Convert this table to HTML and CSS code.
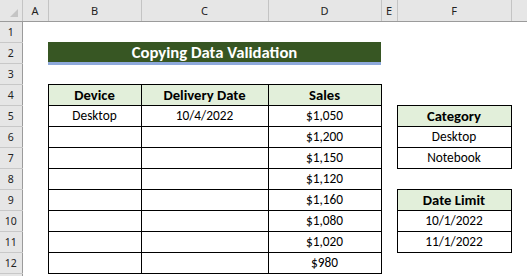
FILE: index.html
```html
<!DOCTYPE html>
<html lang="en">
<head>
    <meta charset="UTF-8">
    <title>Copying Data Validation</title>
    <link rel="stylesheet" href="styles.css">
</head>
<body>
    <table class="sheet">
        <colgroup>
            <col class="c-hdr">
            <col class="c-a">
            <col class="c-b">
            <col class="c-c">
            <col class="c-d">
            <col class="c-e">
            <col class="c-f">
            <col class="c-g">
        </colgroup>
        <tr class="col-heads">
            <td class="corner"><span class="tri"></span></td>
            <td>A</td><td>B</td><td>C</td><td>D</td><td>E</td><td>F</td><td></td>
        </tr>
        <tr><td class="rh">1</td><td></td><td></td><td></td><td></td><td></td><td></td><td></td></tr>
        <tr><td class="rh">2</td><td></td><td colspan="3" class="title">Copying Data Validation</td><td></td><td></td><td></td></tr>
        <tr><td class="rh">3</td><td></td><td></td><td></td><td></td><td></td><td></td><td></td></tr>
        <tr>
            <td class="rh">4</td><td></td>
            <td class="box head">Device</td><td class="box head">Delivery Date</td><td class="box head">Sales</td>
            <td></td><td></td><td></td>
        </tr>
        <tr>
            <td class="rh">5</td><td></td>
            <td class="box">Desktop</td><td class="box">10/4/2022</td><td class="box">$1,050</td>
            <td></td><td class="box head">Category</td><td></td>
        </tr>
        <tr>
            <td class="rh">6</td><td></td>
            <td class="box"></td><td class="box"></td><td class="box">$1,200</td>
            <td></td><td class="box">Desktop</td><td></td>
        </tr>
        <tr>
            <td class="rh">7</td><td></td>
            <td class="box"></td><td class="box"></td><td class="box">$1,150</td>
            <td></td><td class="box">Notebook</td><td></td>
        </tr>
        <tr>
            <td class="rh">8</td><td></td>
            <td class="box"></td><td class="box"></td><td class="box">$1,120</td>
            <td></td><td></td><td></td>
        </tr>
        <tr>
            <td class="rh">9</td><td></td>
            <td class="box"></td><td class="box"></td><td class="box">$1,160</td>
            <td></td><td class="box head">Date Limit</td><td></td>
        </tr>
        <tr>
            <td class="rh">10</td><td></td>
            <td class="box"></td><td class="box"></td><td class="box">$1,080</td>
            <td></td><td class="box">10/1/2022</td><td></td>
        </tr>
        <tr>
            <td class="rh">11</td><td></td>
            <td class="box"></td><td class="box"></td><td class="box">$1,020</td>
            <td></td><td class="box">11/1/2022</td><td></td>
        </tr>
        <tr>
            <td class="rh">12</td><td></td>
            <td class="box"></td><td class="box"></td><td class="box">$980</td>
            <td></td><td></td><td></td>
        </tr>
        <tr><td class="rh"></td><td></td><td></td><td></td><td></td><td></td><td></td><td></td></tr>
    </table>
</body>
</html>
```

FILE: styles.css
```css
* {
    margin: 0;
    padding: 0;
    box-sizing: border-box;
}

body {
    background: white;
    overflow: hidden;
}

.sheet {
    table-layout: fixed;
    border-collapse: collapse;
    width: 527px;
    font-family: Carlito, Calibri, "Liberation Sans", sans-serif;
    font-size: 13.33px;
    color: #000;
}

.c-hdr { width: 22px; }
.c-a { width: 26px; }
.c-b { width: 93px; }
.c-c { width: 127px; }
.c-d { width: 113px; }
.c-e { width: 16px; }
.c-f { width: 114px; }
.c-g { width: 16px; }

.sheet tr {
    height: 21px;
}

.sheet td {
    padding: 0 2px 2px;
    text-align: center;
    vertical-align: bottom;
    white-space: nowrap;
    overflow: hidden;
    line-height: 16px;
}

/* column and row headings */
.col-heads td {
    background: #e6e6e6;
    border-bottom: 1px solid #9b9b9b;
    border-right: 1px solid #c4c4c4;
    font-family: "Noto Sans", sans-serif;
    font-size: 11px;
    color: #222;
    vertical-align: middle;
    line-height: 14px;
    padding-top: 3px;
}

.col-heads td:last-child {
    border-right: none;
}

.corner {
    position: relative;
}

.tri {
    position: absolute;
    right: 4px;
    bottom: 4px;
    width: 0;
    height: 0;
    border-left: 8px solid transparent;
    border-bottom: 8px solid #c4c4c4;
}

.rh {
    background: #e6e6e6;
    border-right: 1px solid #9b9b9b;
    border-bottom: 1px solid #c8c8c8;
    font-family: "Noto Sans", sans-serif;
    font-size: 10.5px;
    color: #222;
    line-height: 14px;
}

/* title banner */
.title {
    background: #375623;
    border-bottom: 3px solid #8ea9db;
    color: white;
    font-weight: bold;
    font-size: 16.7px;
    line-height: 20px;
    padding-bottom: 0;
}

/* bordered tables */
.box {
    border: 1px solid #000;
}

.head {
    background: #e2efda;
    font-weight: bold;
    font-size: 14.67px;
}
```
